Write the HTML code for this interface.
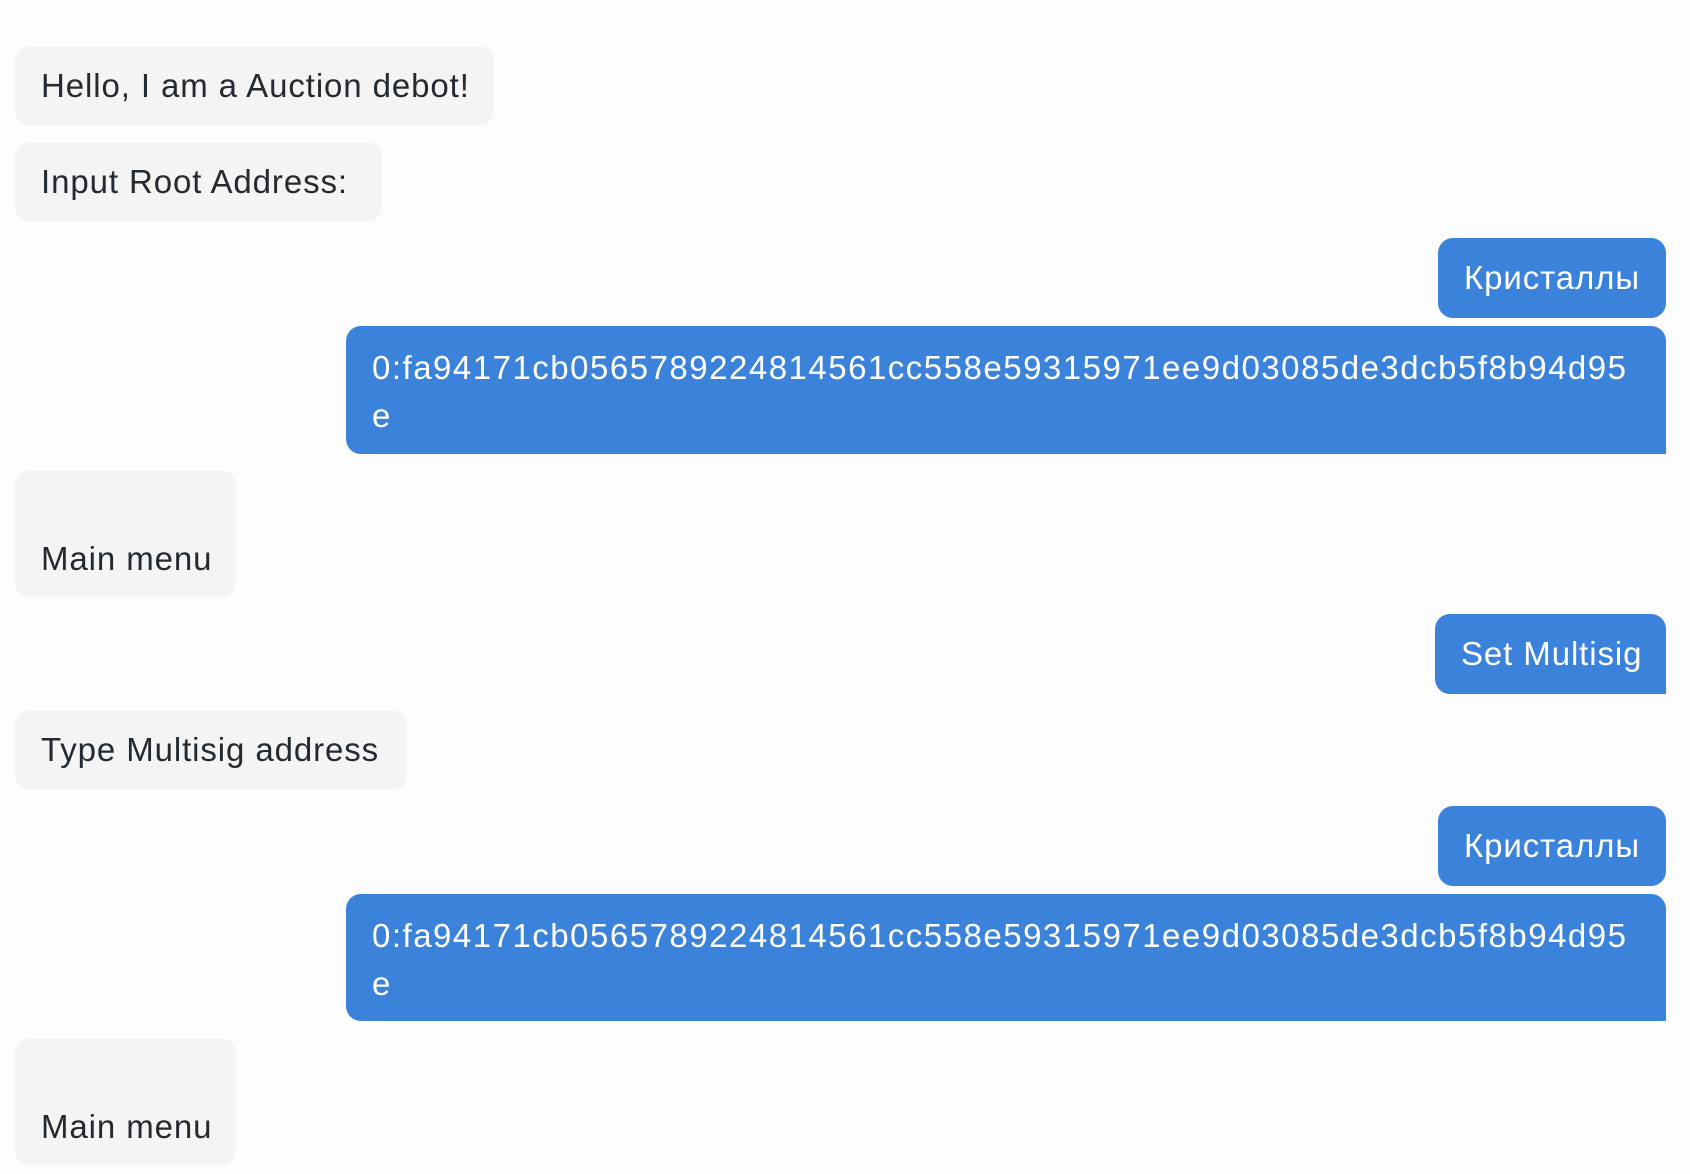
<!DOCTYPE html>
<html><head><meta charset="utf-8"><style>
html,body{margin:0;padding:0;background:#fdfdfd;width:1690px;height:1174px;overflow:hidden}
.b{position:absolute;box-sizing:border-box;border-radius:15px;font-family:"Liberation Sans","DejaVu Sans",sans-serif;font-size:33px;padding-left:26px;display:flex;align-items:center;white-space:nowrap;letter-spacing:0.9px}
.g{background:#f4f4f4;color:#232a31}
.u{background:#3b82db;color:#fff}
.l{display:block;padding-top:18px;line-height:48px;letter-spacing:1.5px}
.m{align-items:flex-end;padding-bottom:19px}
</style></head><body>
<div class="b g" style="left:15px;top:46px;width:479px;height:80px">Hello, I am a Auction debot!</div>
<div class="b g" style="left:15px;top:142px;width:367px;height:80px">Input Root Address:</div>
<div class="b u" style="left:1438px;top:238px;width:228px;height:80px">Кристаллы</div>
<div class="b u l" style="left:346px;top:326px;width:1320px;height:128px;border-bottom-right-radius:0">0:fa94171cb0565789224814561cc558e59315971ee9d03085de3dcb5f8b94d95<br>e</div>
<div class="b g m" style="left:15px;top:470px;width:221px;height:127px">Main menu</div>
<div class="b u" style="left:1435px;top:614px;width:231px;height:80px;border-bottom-right-radius:0">Set Multisig</div>
<div class="b g" style="left:15px;top:710px;width:392px;height:80px">Type Multisig address</div>
<div class="b u" style="left:1438px;top:806px;width:228px;height:80px">Кристаллы</div>
<div class="b u l" style="left:346px;top:894px;width:1320px;height:127px;border-bottom-right-radius:0">0:fa94171cb0565789224814561cc558e59315971ee9d03085de3dcb5f8b94d95<br>e</div>
<div class="b g m" style="left:15px;top:1038px;width:221px;height:127px">Main menu</div>
</body></html>
